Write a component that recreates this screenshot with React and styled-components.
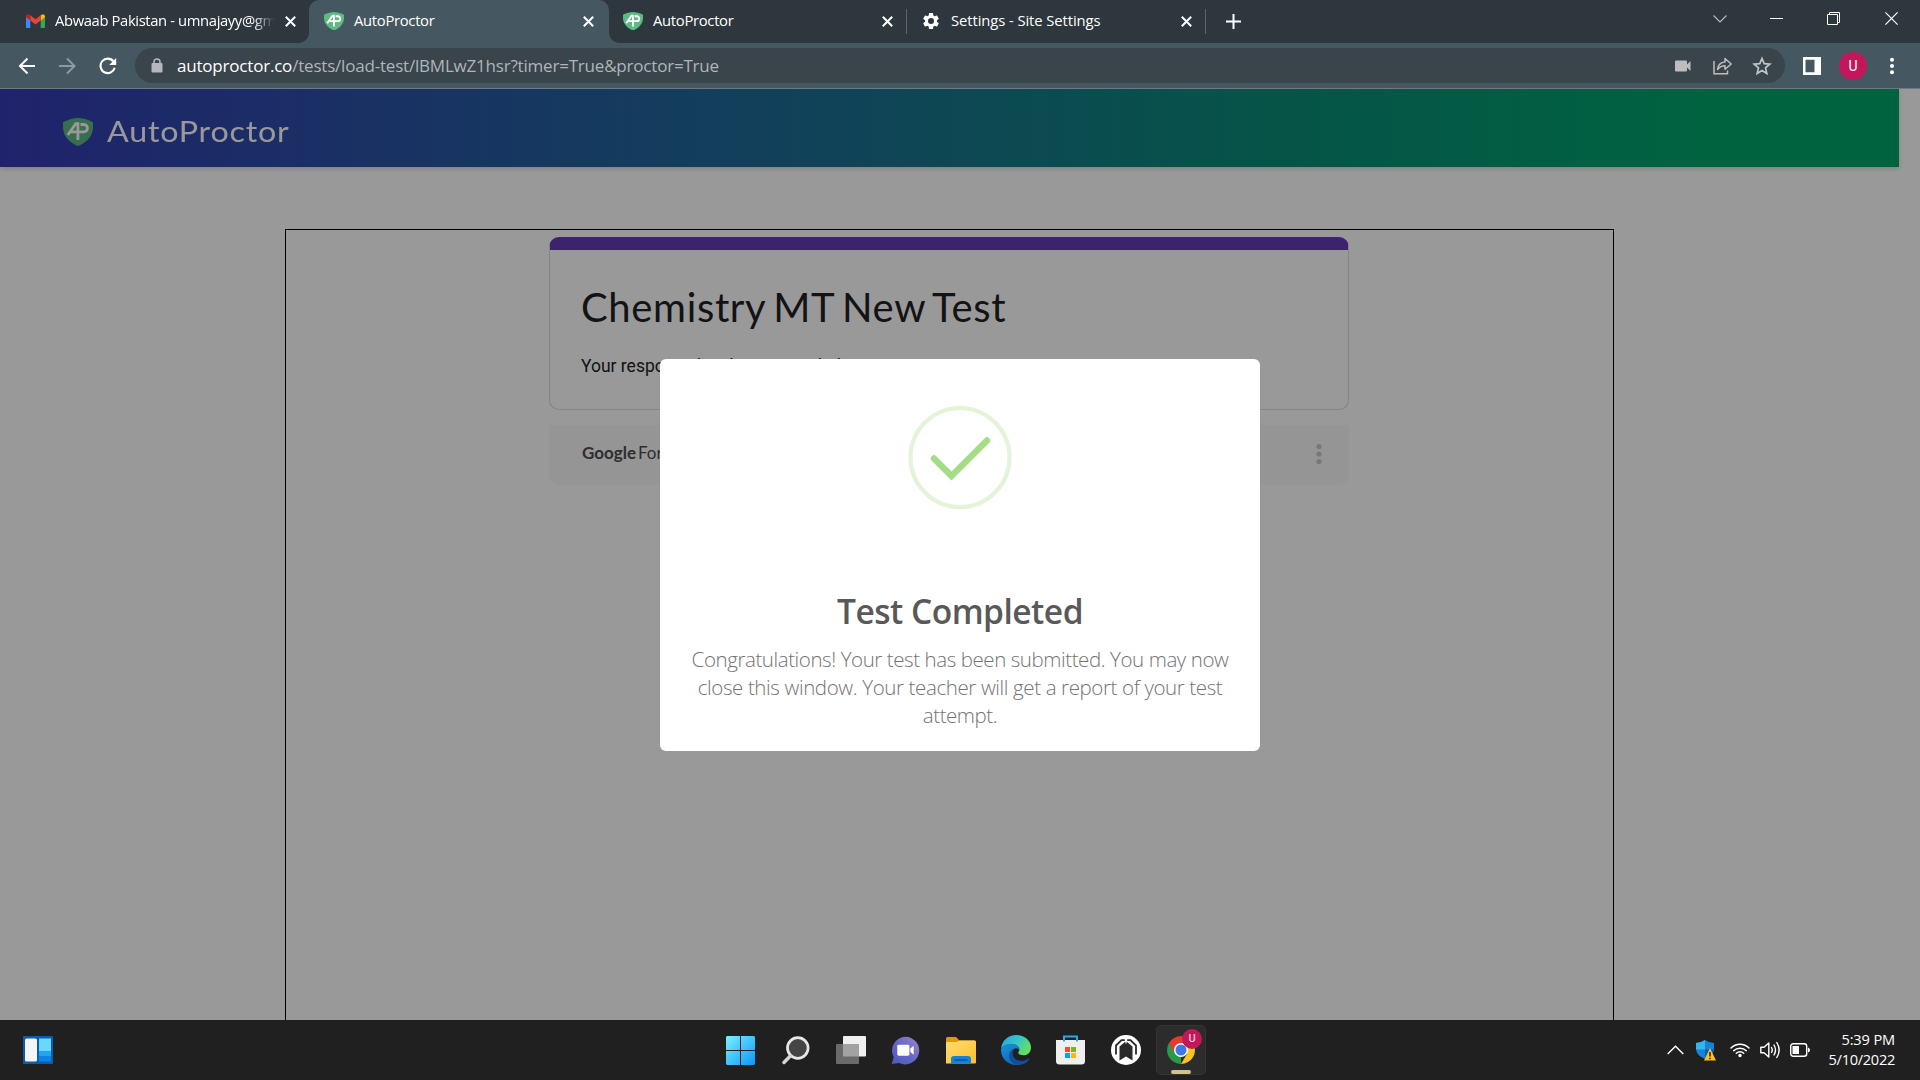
import React from "react";
import styled, { createGlobalStyle, css } from "styled-components";

const Global = createGlobalStyle`
  * { box-sizing: border-box; }
  html, body { margin: 0; padding: 0; overflow: hidden; background: #202020; }
`;

const ui = css`font-family: "Open Sans", "Noto Sans", sans-serif;`;

const Screen = styled.div`
  ${ui}
  width: 1920px;
  height: 1080px;
  display: flex;
  flex-direction: column;
  overflow: hidden;
  svg { display: block; flex: none; }
`;

/* ---------- tab strip ---------- */
const TabStrip = styled.div`
  height: 43px;
  background: #2d373d;
  display: flex;
`;
const Tab = styled.div`
  position: relative;
  width: ${(p) => p.$w}px;
  height: 43px;
  display: flex;
  align-items: center;
  padding: 0 ${(p) => p.$pr || 13.5}px 1px ${(p) => p.$pl}px;
  color: #fff;
  ${(p) =>
    p.$active &&
    css`
      background: #455760;
      border-radius: 10px 10px 0 0;
      &::before,
      &::after {
        content: "";
        position: absolute;
        bottom: 0;
        width: 10px;
        height: 10px;
      }
      &::before {
        left: -10px;
        background: radial-gradient(circle at 0 0, transparent 9.5px, #455760 10px);
      }
      &::after {
        right: -10px;
        background: radial-gradient(circle at 100% 0, transparent 9.5px, #455760 10px);
      }
    `}
`;
const TabTitle = styled.span`
  flex: 1;
  margin-left: ${(p) => p.$ml || 10}px;
  padding-bottom: 3px;
  white-space: nowrap;
  font-size: 14.8px;
  line-height: 22px;
  letter-spacing: ${(p) => p.$ls || 0}px;
  ${(p) => p.$fade && css`mask-image: linear-gradient(to right, #000 86%, transparent 95.5%);`}
`;
const Divider = styled.i`
  width: 1px;
  height: 25px;
  margin-top: 9px;
  background: #5c676d;
`;
const NewTab = styled.div`
  width: 54px;
  display: flex;
  align-items: center;
  justify-content: center;
  padding-bottom: 1px;
`;
const WindowControls = styled.div`
  margin-left: auto;
  display: flex;
  align-items: center;
  height: 37px;
`;
const Control = styled.div`
  width: ${(p) => p.$w}px;
  display: flex;
  justify-content: center;
`;

/* ---------- toolbar ---------- */
const Toolbar = styled.div`
  height: 46px;
  background: #455760;
  border-bottom: 1px solid #6d7a81;
  display: flex;
  align-items: center;
  padding-left: 7px;
`;
const NavButton = styled.div`
  width: 40.5px;
  display: flex;
  justify-content: center;
`;
const Omnibox = styled.div`
  width: 1650px;
  height: 35px;
  margin-left: 6.5px;
  border-radius: 18px;
  background: #39444b;
  display: flex;
  align-items: center;
  padding: 0 13px 0 16px;
`;
const Url = styled.div`
  flex: 1;
  margin-left: 14px;
  font-size: 17px;
  line-height: 24px;
  letter-spacing: ${(p) => p.$ls}px;
  color: #b0b5b8;
  white-space: nowrap;
  b { color: #fff; font-weight: 400; }
`;
const OmniActions = styled.div`
  display: flex;
  align-items: center;
  gap: 19px;
  svg:first-child { margin-right: 3px; }
`;
const Avatar = styled.div`
  width: 28px;
  height: 28px;
  border-radius: 50%;
  margin-right: 22px;
  background: #c2185b;
  color: #fff;
  font: 400 14px/28px Roboto, sans-serif;
  text-align: center;
`;

/* ---------- page ---------- */
const Viewport = styled.div`
  position: relative;
  height: 931px;
  background: #fff;
  overflow: hidden;
`;
const PageBody = styled.div`
  width: 1899px;
  display: flex;
  flex-direction: column;
  align-items: center;
`;
const Header = styled.header`
  align-self: stretch;
  height: 78px;
  padding: 7px 0 0 63px;
  display: flex;
  align-items: center;
  gap: 14px;
  background: linear-gradient(to right, #353bb4 0, #353cb2 20px, #22649d 640px, #17788c 960px, #0a8c78 1280px, #00a56c 1700px);
  box-shadow: 0 2px 4px rgba(0, 0, 0, 0.15);
`;
const Brand = styled.span`
  font: 400 28.5px/40px Lato, sans-serif;
  letter-spacing: 0.7px;
  padding-bottom: 2px;
  transform: scaleX(1.13);
  transform-origin: left center;
  color: #fff;
`;
const Frame = styled.main`
  width: 1329px;
  height: 900px;
  margin-top: 62px;
  border: 1px solid #000;
  padding: 7px 0 0 263px;
  display: flex;
  flex-direction: column;
`;
const FormCard = styled.section`
  width: 800px;
  height: 173px;
  border: 1px solid #dadce0;
  border-top: 13px solid #673ab7;
  border-radius: 10px;
  padding: 32px 31px;
  color: #202124;
`;
const FormTitle = styled.h1`
  margin: 0;
  font: 400 40px/50px Lato, sans-serif;
  letter-spacing: 0.65px;
  word-spacing: -3px;
`;
const FormText = styled.p`
  margin: 21px 0 0;
  font: 400 17.5px/26px Roboto, sans-serif;
`;
const FormFooter = styled.footer`
  width: 800px;
  height: 60px;
  margin-top: 15px;
  padding: 0 27px 3px 33px;
  border-radius: 0 0 10px 10px;
  background: #f8f8f8;
  display: flex;
  align-items: center;
  justify-content: space-between;
  color: #4a4d50;
  font: 400 17px/24px Lato, sans-serif;
  span { padding-bottom: 1px; }
  b { font-weight: 700; margin-right: 2px; }
`;
const Overlay = styled.div`
  position: absolute;
  inset: 0;
  background: rgba(0, 0, 0, 0.4);
  display: flex;
  align-items: center;
  justify-content: center;
`;
const Modal = styled.div`
  width: 600px;
  height: 392px;
  margin-top: 1px;
  padding-top: 47px;
  border-radius: 6px;
  background: #fff;
  display: flex;
  flex-direction: column;
  align-items: center;
`;
const ModalTitle = styled.h2`
  margin: 79px 0 0;
  color: #595959;
  font-size: 33.5px;
  font-weight: 600;
  line-height: 44px;
  letter-spacing: ${(p) => p.$ls}px;
`;
const ModalText = styled.p`
  margin: 12px 0 0;
  text-align: center;
  color: #737373;
  font-size: 20.5px;
  font-weight: 300;
  line-height: 28px;
`;
const Line = styled.span`
  display: block;
  white-space: nowrap;
  letter-spacing: ${(p) => p.$ls}px;
`;

/* ---------- taskbar ---------- */
const Taskbar = styled.div`
  height: 60px;
  background: #202020;
  display: grid;
  grid-template-columns: 716px 1fr 714px;
  align-items: center;
`;
const TaskLeft = styled.div`padding-left: 23px;`;
const TaskApps = styled.div`
  display: flex;
  align-items: center;
  gap: 5px;
`;
const TaskApp = styled.div`
  position: relative;
  width: 50px;
  height: 50px;
  flex: none;
  border-radius: 5px;
  display: flex;
  align-items: center;
  justify-content: center;
  padding-right: ${(p) => p.$nudge || 0}px;
  ${(p) => p.$open && css`background: #2c2c2c; border: 1px solid #353535;`}
`;
const Indicator = styled.i`
  position: absolute;
  bottom: 0;
  width: 20px;
  height: 4px;
  border-radius: 2px;
  background: #d4c18d;
`;
const Badge = styled.i`
  position: absolute;
  top: 3px;
  right: 3px;
  width: 20px;
  height: 20px;
  border-radius: 50%;
  background: #c2185b;
  color: #f3c4d6;
  font: 500 11px/20px Roboto, sans-serif;
  text-align: center;
`;
const Tray = styled.div`
  display: flex;
  align-items: center;
  justify-content: flex-end;
  padding-right: 25px;
`;
const TrayIcons = styled.div`
  display: flex;
  align-items: center;
  gap: 10px;
  margin-right: 19px;
  svg:nth-child(1) { margin-right: 2px; }
  svg:nth-child(2) { margin-right: 4px; }
`;
const Clock = styled.div`
  width: 66px;
  padding-bottom: 2px;
  color: #fff;
  font-size: 14.6px;
  line-height: 20px;
  display: flex;
  flex-direction: column;
  align-items: flex-end;
`;
const ClockLine = styled.div`
  white-space: nowrap;
  letter-spacing: ${(p) => p.$ls}px;
`;

/* ---------- drawings ---------- */
const Shield = ({ w = 20, h = 18 }) => (
  <svg width={w} height={h} viewBox="0 0 30 28" preserveAspectRatio="none">
    <path d="M15 0C19 0 25 1.6 30 4.2V10C29.6 18.500 23 25 15 28 7 25 .4 18.500 0 10V4.200C5 1.600 11 0 15 0Z" fill="#5dba83" />
    <g fill="none" stroke="#fff" strokeWidth="2.800">
      <path d="M4.800 17 12.800 5.600H14.900V22" />
      <path d="M8 13.800H20.800C25.600 13.800 25.600 6.500 20.800 6.500H17.500" />
    </g>
  </svg>
);
const Cross = () => (
  <svg width="11" height="11" viewBox="0 0 11 11"><path d="M.8.8 10.200 10.200M10.200.8.8 10.200" stroke="#fff" strokeWidth="2" /></svg>
);
const Gmail = () => (
  <svg width="19" height="14" viewBox="0 0 19 14">
    <path d="M0 2V13q0 1 1 1H4.300V6Z" fill="#4285f4" />
    <path d="M19 2V13q0 1-1 1H14.700V6Z" fill="#34a853" />
    <path d="M14.700 1.200 17 .2q2 .3 2 2V3.200L14.700 6.600Z" fill="#fbbc04" />
    <path d="M4.300 1.200 2 .2Q0 .5 0 2.200V3.200L4.300 6.600Z" fill="#c5221f" />
    <path d="M4.300 1.200V6.600L9.500 10.600 14.700 6.600V1.200L9.500 5.200Z" fill="#ea4335" />
  </svg>
);
const Gear = () => (
  <svg width="20" height="20" viewBox="0 0 24 24">
    <path fill="#fff" fillRule="evenodd" d="M19.140 12.940c.04-.3.060-.61.060-.94s-.02-.64-.07-.94l2.030-1.580c.18-.14.230-.41.120-.61l-1.920-3.320c-.12-.22-.37-.29-.59-.22l-2.390.96c-.5-.38-1.030-.7-1.620-.94l-.36-2.540c-.04-.24-.24-.41-.48-.41h-3.840c-.24 0-.43.17-.47.41l-.36 2.540c-.59.24-1.130.57-1.620.94l-2.390-.96c-.22-.08-.47 0-.59.22L2.740 8.870c-.12.210-.08.470.12.610l2.030 1.580c-.05.3-.09.630-.09.940s.02.640.07.940l-2.030 1.580c-.18.14-.23.410-.12.610l1.920 3.320c.12.220.37.290.59.220l2.390-.96c.5.380 1.030.7 1.620.94l.36 2.540c.05.240.24.410.48.410h3.840c.24 0 .44-.17.470-.41l.36-2.540c.59-.24 1.130-.56 1.620-.94l2.390.96c.22.080.47 0 .59-.22l1.920-3.320c.12-.22.070-.47-.12-.61l-2.010-1.580zM12 15.600A3.600 3.600 0 1 1 12 8.400a3.600 3.600 0 0 1 0 7.200z" />
  </svg>
);
const Dots = ({ color, gap = 6.3, r = 2 }) => (
  <svg width="6" height="22" viewBox="0 0 6 22" fill={color}>
    <circle cx="3" cy={11 - gap} r={r} /><circle cx="3" cy="11" r={r} /><circle cx="3" cy={11 + gap} r={r} />
  </svg>
);
const Arrow = ({ color, flip }) => (
  <svg width="18" height="18" viewBox="0 0 18 18" fill="none" stroke={color} strokeWidth="2">
    <path d={flip ? "M0 9H15M8 1.500 15.500 9 8 16.500" : "M17 9H2M9.500 1.500 2 9 9.500 16.500"} />
  </svg>
);
const Reload = () => (
  <svg width="18" height="18" viewBox="0 0 18 18">
    <path d="M14.500 4.500A7.200 7.200 0 1 0 15.700 10.800" fill="none" stroke="#fff" strokeWidth="2.100" />
    <path d="M17.200 1V8H10.200Z" fill="#fff" />
  </svg>
);
const Lock = () => (
  <svg width="12" height="15" viewBox="0 0 12 15">
    <rect x="0.500" y="5" width="11" height="9.500" rx="1" fill="#b4b8bb" />
    <path d="M3 6V4a3 3 0 0 1 6 0V6" fill="none" stroke="#b4b8bb" strokeWidth="1.500" />
  </svg>
);
const Camera = () => (
  <svg width="16" height="12" viewBox="0 0 16 12"><path d="M0 1.500q0-1 1-1H11q1 0 1 1V4.500L15.500 1V11L12 7.500V10.500q0 1-1 1H1q-1 0-1-1Z" fill="#bdbdbd" /></svg>
);
const Share = () => (
  <svg width="20" height="18" viewBox="0 0 20 18" fill="none" stroke="#bdbdbd" strokeWidth="1.500">
    <path d="M1 4V16.800H14.500V13.500" />
    <path d="M4.500 12.500C5 8 8 5.300 12 5V1.500L18.200 7 12 12.200V8.800C9 8.800 6.500 10 4.500 12.500Z" strokeLinejoin="round" />
  </svg>
);
const Star = () => (
  <svg width="20" height="20" viewBox="0 0 20 20"><path d="M10 2.500 12.200 7.700 17.800 8.200 13.500 11.900 14.800 17.400 10 14.500 5.200 17.400 6.500 11.900 2.200 8.200 7.800 7.700Z" fill="none" stroke="#c3c5c6" strokeWidth="1.700" /></svg>
);
const SidePanel = () => (
  <svg width="18" height="18" viewBox="0 0 18 18"><path fillRule="evenodd" d="M0 0H18V18H0ZM2.500 2.800V15.200H11.500V2.800Z" fill="#fff" /></svg>
);
const Success = () => (
  <svg width="104" height="104" viewBox="0 0 104 104" fill="none">
    <circle cx="52" cy="51.500" r="49.500" stroke="#e4f4db" strokeWidth="4.300" />
    <path d="M26 52.500 43.500 70 79 34.500" stroke="#a5dc86" strokeWidth="6.400" strokeLinecap="round" />
  </svg>
);
const Widgets = () => (
  <svg width="30" height="28" viewBox="0 0 30 28">
    <rect width="30" height="28" rx="1" fill="#0b5cab" />
    <rect x="2" y="2.500" width="12" height="23" rx="1.500" fill="#f5f5f5" />
    <rect x="16" y="2.500" width="12" height="13" fill="#69d8ff" />
    <rect x="16" y="16" width="12" height="4.500" fill="#1ea6f8" />
    <rect x="16" y="21" width="12" height="4.500" fill="#0a84ea" />
  </svg>
);
const Start = () => (
  <svg width="29" height="29" viewBox="0 0 29 29">
    <defs><linearGradient id="st" x2="29" y2="29" gradientUnits="userSpaceOnUse"><stop stopColor="#7af0ff" /><stop offset="1" stopColor="#0a97f8" /></linearGradient></defs>
    <path fill="url(#st)" d="M1 0H14V14H0V1ZM15 0H28L29 1V14H15ZM0 15H14V29H1L0 28ZM15 15H29V28L28 29H15Z" />
  </svg>
);
const Search = () => (
  <svg width="28" height="29" viewBox="0 0 28 29">
    <circle cx="15.800" cy="12" r="10.300" fill="#454545" stroke="#e6e8ea" strokeWidth="2.700" />
    <path d="M2 26.500 8.300 20" stroke="#d4d6d8" strokeWidth="3.400" strokeLinecap="round" />
  </svg>
);
const TaskView = () => (
  <svg width="30" height="28" viewBox="0 0 30 28">
    <rect x="7" y="0" width="23" height="20.500" rx="1" fill="#f0f0f0" />
    <rect x="0" y="8" width="23" height="20" rx="1" fill="#6a6a6a" />
    <path d="M7 8H23V20.500H7Z" fill="#a2a2a2" />
  </svg>
);
const Chat = () => (
  <svg width="29" height="29" viewBox="0 0 30 29">
    <defs><linearGradient id="ch" x1="1" x2="0" y2="1"><stop stopColor="#9a86c8" /><stop offset=".5" stopColor="#6668c6" /><stop offset="1" stopColor="#4d55c0" /></linearGradient></defs>
    <path d="M15 .3A14.300 14.300 0 1 1 8.500 27.400L.6 28.500 2.800 21.500A14.300 14.300 0 0 1 15 .3Z" fill="url(#ch)" />
    <rect x="6.500" y="8.500" width="12.500" height="11.500" rx="1.500" fill="#fff" />
    <path d="M20 12.500 23.500 9.500V19L20 16Z" fill="#fff" />
  </svg>
);
const Folder = () => (
  <svg width="30" height="27" viewBox="0 0 30 27">
    <defs><linearGradient id="fo" x2="1" y2="1"><stop stopColor="#ffdc72" /><stop offset="1" stopColor="#fdbf2d" /></linearGradient></defs>
    <path d="M0 1.500Q0 0 1.500 0H10L13.500 3.500H28.500Q30 3.500 30 5V12H0Z" fill="#dd9a0a" />
    <path d="M0 6.500Q0 5 1.500 5H10.500L13.500 3.500H28.500Q30 3.500 30 5V25.500Q30 26.500 29 26.500H0Z" fill="url(#fo)" />
    <path d="M5 26.500V22Q5 19 8 19H22Q25 19 25 22V26.500Z" fill="#1283d8" />
    <path d="M8.500 23H21.500" stroke="#0a539c" strokeWidth="1.500" />
  </svg>
);
const Edge = () => (
  <svg width="30" height="30" viewBox="0 0 30 30">
    <defs>
      <linearGradient id="e1" x2="1" y2=".6"><stop stopColor="#2a9fe0" /><stop offset=".5" stopColor="#35c4c9" /><stop offset="1" stopColor="#66e05a" /></linearGradient>
      <linearGradient id="e2" x2=".6" y2="1"><stop stopColor="#1a93dc" /><stop offset="1" stopColor="#0a66b8" /></linearGradient>
    </defs>
    <path d="M0 14C1 5 7.500 0 15 0 24 0 30 6 30 12.500 30 17.500 26.500 20.300 22.500 20.300 19 20.300 16.800 18.800 17.300 17.300 20 14 17 9 10.500 9 5 9 1 11.500 0 14Z" fill="url(#e1)" />
    <path d="M0 14C1.500 10.800 5.500 8.700 10 8.700 15.500 8.700 19 12 18.500 15.500 16 11 10 14 11.500 20 12.500 25 17 28 21.500 28.500 19 29.700 17 30 15 30 6.500 30-.5 23 0 14Z" fill="url(#e2)" />
    <path d="M12.300 13.500C10.500 16 11 22 15 24.500 19 27 24 26 27.700 23.500 28.300 23.100 28.600 23.500 28.200 24.200 25 29.500 18 31.500 12.500 28.500 6.500 25 7 16.500 12.300 13.500Z" fill="#114f9c" />
  </svg>
);
const Store = () => (
  <svg width="29" height="30" viewBox="0 0 29 30">
    <path d="M0 5H29V26Q29 29.500 25.500 29.500H3.500Q0 29.500 0 26Z" fill="#efefef" />
    <path d="M8 6.500V1.500H21V6.500" fill="none" stroke="#29a9e8" strokeWidth="2" />
    <path d="M9 12H14V17H9Z" fill="#f25022" /><path d="M15 12H20V17H15Z" fill="#7fba00" />
    <path d="M9 18H14V23H9Z" fill="#00a4ef" /><path d="M15 18H20V23H15Z" fill="#ffb900" />
  </svg>
);
const Round = () => (
  <svg width="30" height="30" viewBox="0 0 30 30">
    <circle cx="15" cy="15" r="15" fill="#fff" />
    <path d="M5 19.500V10.500L10.500 5.200H13.800" fill="none" stroke="#2b2b2b" strokeWidth="1.800" />
    <path d="M25 19.500V10.500L19.500 5.200H16.200" fill="none" stroke="#2b2b2b" strokeWidth="1.800" />
    <path d="M8.500 11.500 14.200 6.800H15.800L21.500 11.500V25.500L15 21.500 8.500 25.500Z" fill="#2b2b2b" />
    <path d="M15 5V8.500" stroke="#fff" strokeWidth="1.200" />
  </svg>
);
const Chrome = () => (
  <svg width="28" height="28" viewBox="0 0 28 28">
    <path d="M14 14 14 28A14 14 0 0 1 1.900 7Z" fill="#2b9a48" />
    <path d="M14 7H26.100A14 14 0 0 1 14 28L20.200 17.500Z" fill="#fcc31e" />
    <path d="M14 7 7.900 17.500 1.900 7A14 14 0 0 1 26.100 7Z" fill="#e33b2e" />
    <circle cx="14" cy="14" r="7" fill="#fff" /><circle cx="14" cy="14" r="5.500" fill="#3b78e7" />
  </svg>
);
const Defender = () => (
  <svg width="20" height="21" viewBox="0 0 20 21">
    <path d="M0 3Q5 3 9 0 13 3 18 3V9Q18 15 9 19 0 15 0 9Z" fill="#1583d8" />
    <path d="M0 3Q5 3 9 0V9.500H0Z" fill="#35b4f0" /><path d="M9 9.500H18Q17.500 15 9 19Z" fill="#0b5cb5" />
    <path d="M14 8 20 20.500H8Z" fill="#fcc21b" /><path d="M14 12V16.500M14 17.800V19.300" stroke="#222" strokeWidth="1.500" />
  </svg>
);
const Wifi = () => (
  <svg width="20" height="16" viewBox="0 0 20 16" fill="none" stroke="#fff" strokeWidth="1.500" strokeLinecap="round">
    <path d="M1 6A12.500 12.500 0 0 1 19 6M3.700 8.800A8.800 8.800 0 0 1 16.300 8.800M6.300 11.300A5.200 5.200 0 0 1 13.700 11.300" />
    <circle cx="10" cy="13.500" r="1" fill="#fff" />
  </svg>
);
const Speaker = () => (
  <svg width="20" height="18" viewBox="0 0 20 18" fill="none" stroke="#fff" strokeWidth="1.400" strokeLinecap="round" strokeLinejoin="round">
    <path d="M.8 6.200H4L8.800 2V16L4 11.800H.8ZM11.500 6.500Q13 9 11.500 11.500M14 4Q17 9 14 14M16.800 1.500Q21.500 9 16.800 16.500" />
  </svg>
);
const Battery = () => (
  <svg width="20" height="14" viewBox="0 0 20 14">
    <rect x=".7" y=".7" width="16" height="12.600" rx="2.500" fill="none" stroke="#fff" strokeWidth="1.400" />
    <rect x="2.500" y="3" width="6.500" height="8" fill="#fff" /><path d="M18 4.500Q20 5 20 7T18 9.500Z" fill="#fff" />
  </svg>
);

export default function App() {
  return (
    <Screen>
      <Global />
      <TabStrip>
        <Tab $w={309} $pl={26}><Gmail /><TabTitle $fade $ls={-0.38}>Abwaab Pakistan - umnajayy@gm</TabTitle><Cross /></Tab>
        <Tab $w={300} $pl={15} $pr={15} $active><Shield w={20} h={18.5} /><TabTitle $ls={-0.3}>AutoProctor</TabTitle><Cross /></Tab>
        <Tab $w={297} $pl={14}><Shield w={20} h={18.5} /><TabTitle $ls={-0.3}>AutoProctor</TabTitle><Cross /></Tab>
        <Divider />
        <Tab $w={298} $pl={14}><Gear /><TabTitle $ml={10} $ls={-0.08}>Settings - Site Settings</TabTitle><Cross /></Tab>
        <Divider />
        <NewTab><svg width="15" height="15" viewBox="0 0 15 15"><path d="M7.500 0V15M0 7.500H15" stroke="#fff" strokeWidth="2" /></svg></NewTab>
        <WindowControls>
          <Control $w={57}><svg width="14" height="8" viewBox="0 0 14 8"><path d="M.5.5 7 7 13.500.5" fill="none" stroke="#b8bcbf" strokeWidth="1.200" /></svg></Control>
          <Control $w={57}><svg width="13" height="1"><rect width="13" height="1" fill="#fff" /></svg></Control>
          <Control $w={57}><svg width="13" height="13" viewBox="0 0 13 13" fill="none" stroke="#fff"><path d="M.5 2.500H10.500V12.500H.5ZM2.500 2.500V.5H12.500V10.500H10.500" /></svg></Control>
          <Control $w={58}><svg width="13" height="13" viewBox="0 0 13 13"><path d="M.4.4 12.600 12.600M12.600.4.4 12.600" stroke="#fff" strokeWidth="1.200" /></svg></Control>
        </WindowControls>
      </TabStrip>
      <Toolbar>
        <NavButton><Arrow color="#fff" /></NavButton>
        <NavButton><Arrow color="#8f9a9f" flip /></NavButton>
        <NavButton><Reload /></NavButton>
        <Omnibox>
          <Lock />
          <Url $ls={-0.2}><b>autoproctor.co</b>/tests/load-test/lBMLwZ1hsr?timer=True&amp;proctor=True</Url>
          <OmniActions><Camera /><Share /><Star /></OmniActions>
        </Omnibox>
        <Control $w={54}><SidePanel /></Control>
        <Avatar>U</Avatar>
        <Dots color="#fff" />
      </Toolbar>
      <Viewport>
        <PageBody>
          <Header><Shield w={30} h={28} /><Brand>AutoProctor</Brand></Header>
          <Frame>
            <FormCard>
              <FormTitle>Chemistry MT New Test</FormTitle>
              <FormText>Your response has been recorded.</FormText>
            </FormCard>
            <FormFooter><span><b>Google</b>Forms</span><Dots color="#c8c8c8" gap={7.5} r={2.6} /></FormFooter>
          </Frame>
        </PageBody>
        <Overlay>
          <Modal>
            <Success />
            <ModalTitle $ls={-0.5}>Test Completed</ModalTitle>
            <ModalText>
              <Line $ls={-0.42}>Congratulations! Your test has been submitted. You may now</Line>
              <Line $ls={-0.38}>close this window. Your teacher will get a report of your test</Line>
              <Line $ls={-0.44}>attempt.</Line>
            </ModalText>
          </Modal>
        </Overlay>
      </Viewport>
      <Taskbar>
        <TaskLeft><Widgets /></TaskLeft>
        <TaskApps>
          <TaskApp $nudge={1}><Start /></TaskApp>
          <TaskApp><Search /></TaskApp>
          <TaskApp><TaskView /></TaskApp>
          <TaskApp $nudge={1}><Chat /></TaskApp>
          <TaskApp><Folder /></TaskApp>
          <TaskApp><Edge /></TaskApp>
          <TaskApp $nudge={1}><Store /></TaskApp>
          <TaskApp><Round /></TaskApp>
          <TaskApp $open><Chrome /><Badge>U</Badge><Indicator /></TaskApp>
        </TaskApps>
        <Tray>
          <TrayIcons>
            <svg width="17" height="10" viewBox="0 0 17 10"><path d="M.7 9 8.500 1.200 16.300 9" fill="none" stroke="#fff" strokeWidth="1.400" /></svg>
            <Defender /><Wifi /><Speaker /><Battery />
          </TrayIcons>
          <Clock><ClockLine $ls={-0.15}>5:39 PM</ClockLine><ClockLine $ls={-0.3}>5/10/2022</ClockLine></Clock>
        </Tray>
      </Taskbar>
    </Screen>
  );
}
